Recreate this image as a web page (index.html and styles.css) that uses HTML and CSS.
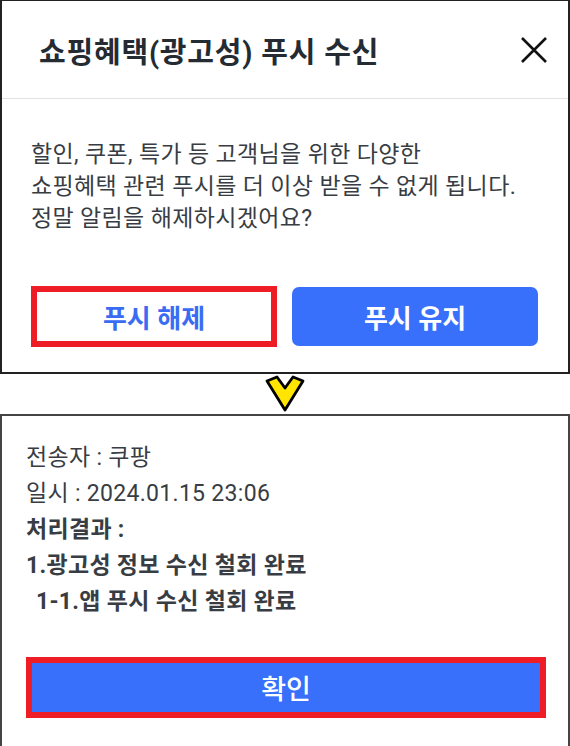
FILE: index.html
```html
<!DOCTYPE html>
<html lang="ko">
<head>
    <meta charset="UTF-8">
    <meta name="viewport" content="width=device-width, initial-scale=1.0">
    <title>쇼핑혜택 푸시 수신 해제</title>
    <link rel="stylesheet" href="styles.css">
</head>
<body>
    <!-- 푸시 해제 확인 팝업 -->
    <div class="sheet">
        <div class="sheet-header">
            <h1>쇼핑혜택(광고성) 푸시 수신</h1>
            <button class="close-btn" aria-label="닫기">
                <svg width="28" height="28" viewBox="0 0 28 28">
                    <path d="M2 2 L26 26 M26 2 L2 26" stroke="#111" stroke-width="2.6" fill="none"/>
                </svg>
            </button>
        </div>
        <div class="sheet-body">
            <p class="message">할인, 쿠폰, 특가 등 고객님을 위한 다양한<br>쇼핑혜택 관련 푸시를 더 이상 받을 수 없게 됩니다.<br>정말 알림을 해제하시겠어요?</p>
            <div class="actions">
                <div class="mark">
                    <button class="btn btn-line">푸시 해제</button>
                </div>
                <button class="btn btn-fill">푸시 유지</button>
            </div>
        </div>
    </div>

    <!-- 다음 단계 화살표 -->
    <div class="step-arrow">
        <svg width="42" height="38" viewBox="0 0 42 38">
            <path d="M3 6 L13 2 L21 13 L29 2 L39 6 L21 35 Z" fill="#ffe500" stroke="#000" stroke-width="2.8" stroke-linejoin="round"/>
        </svg>
    </div>

    <!-- 처리 결과 안내 -->
    <div class="result">
        <ul class="result-list">
            <li>전송자 : 쿠팡</li>
            <li>일시 : 2024.01.15 23:06</li>
            <li class="strong">처리결과 :</li>
            <li class="strong">1.광고성 정보 수신 철회 완료</li>
            <li class="strong sub">1-1.앱 푸시 수신 철회 완료</li>
        </ul>
        <div class="mark mark-wide">
            <button class="btn btn-fill btn-square">확인</button>
        </div>
    </div>
</body>
</html>
```

FILE: styles.css
```css
body {
    margin: 0;
    background-color: #fff;
    font-family: Roboto, "Noto Sans CJK KR", sans-serif;
    color: #383d43;
}
.sheet {
    height: 374px;
    box-sizing: border-box;
    border: 2px solid #222;
    border-top-width: 1px;
}
.sheet-header {
    height: 97px;
    display: flex;
    align-items: center;
    justify-content: space-between;
    padding: 0 20px 0 37px;
    border-bottom: 1px solid #e2e2e2;
}
.sheet-header h1 {
    margin: 0;
    font-size: 29px;
    font-weight: 700;
    letter-spacing: 0.8px;
    color: #252b33;
}
.close-btn {
    background: none;
    border: none;
    padding: 0;
    width: 28px;
    height: 28px;
}
.sheet-body {
    padding: 40px 30px 0 29px;
}
.message {
    margin: 0;
    font-size: 23px;
    letter-spacing: 0.35px;
    line-height: 32px;
}
.actions {
    display: flex;
    gap: 15px;
    margin-top: 51px;
    align-items: center;
}
.mark {
    border: 6px solid #ee1c25;
    flex: 1;
    display: flex;
}
.btn {
    flex: 1;
    border: none;
    font-family: inherit;
    font-size: 26px;
    font-weight: 700;
    cursor: pointer;
}
.btn-line {
    background-color: #fff;
    color: #3a6cf3;
    height: 49px;
}
.btn-fill {
    background-color: #3870fb;
    color: #fff;
    height: 59px;
    border-radius: 7px;
}
.step-arrow {
    height: 40px;
    display: flex;
    justify-content: center;
    align-items: center;
}
.result {
    height: 332px;
    box-sizing: border-box;
    border: 2px solid #444;
    border-bottom: none;
    padding: 24px 22px 0 24px;
}
.result-list {
    list-style: none;
    margin: 0;
    padding: 0;
    font-size: 23px;
    letter-spacing: 0.3px;
    line-height: 36px;
}
.result-list .strong {
    font-weight: 700;
}
.result-list .sub {
    padding-left: 10px;
}
.mark-wide {
    margin-top: 37px;
}
.btn-square {
    border-radius: 0;
    height: 49px;
    font-size: 27px;
    font-weight: 500;
}
```
